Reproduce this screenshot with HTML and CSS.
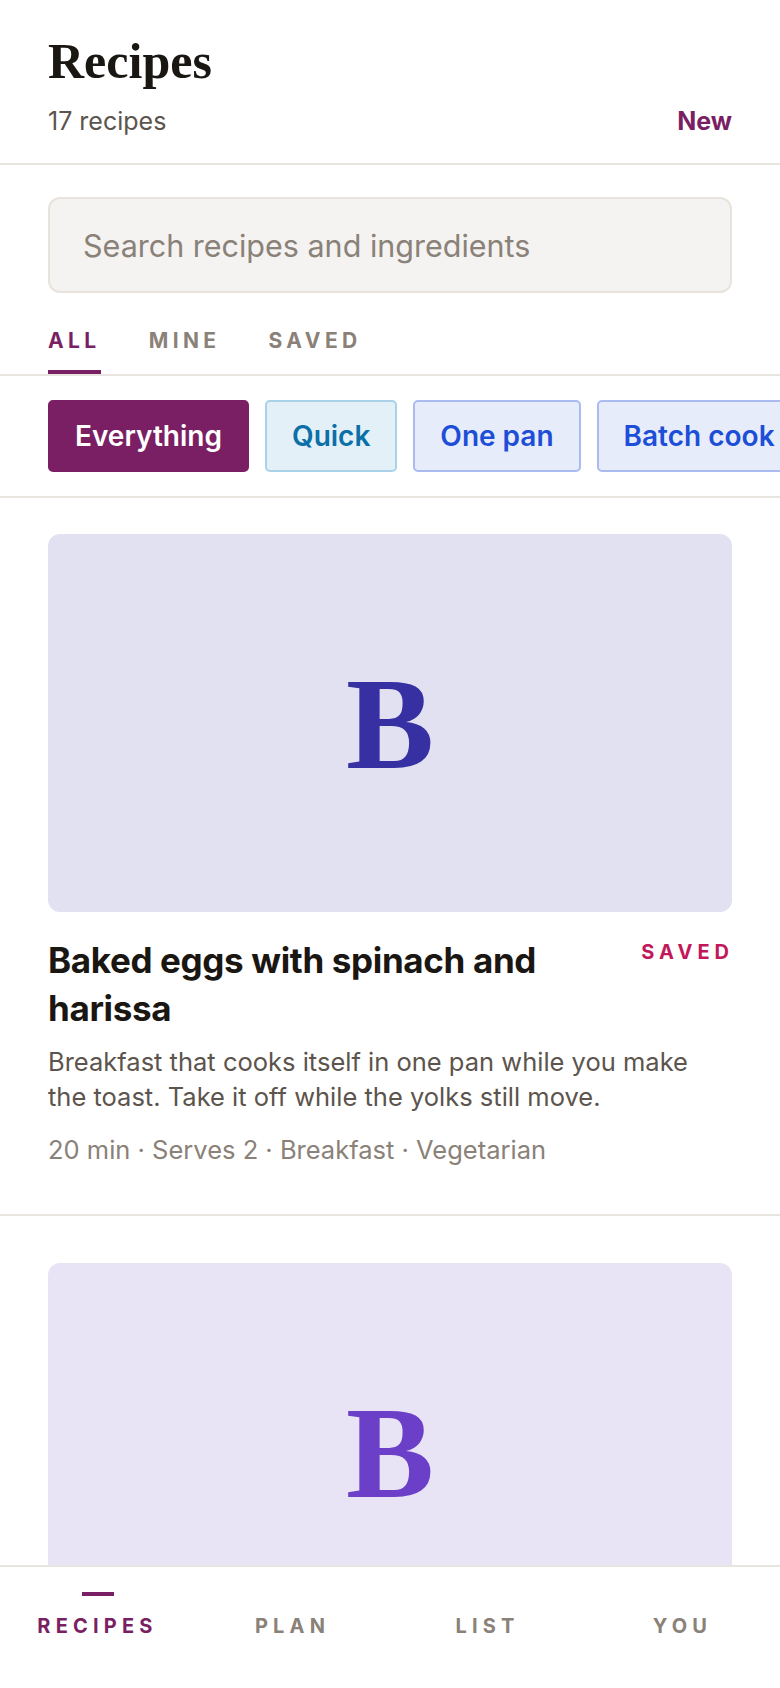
FILE: index.html
```html
<!DOCTYPE html>
<html lang="en">
<head>
    <meta charset="UTF-8">
    <meta name="viewport" content="width=device-width, initial-scale=1.0">
    <title>Recipes</title>
    <link rel="stylesheet" href="styles.css">
</head>
<body>
    <div class="app">
        <header class="page-header">
            <h1 class="page-title">Recipes</h1>
            <div class="page-sub">
                <span class="recipe-count">17 recipes</span>
                <a class="new-link" href="#">New</a>
            </div>
        </header>

        <main class="content">
            <div class="search-wrap">
                <input class="search-input" type="text" placeholder="Search recipes and ingredients">
            </div>

            <nav class="tabs">
                <a class="tab active" href="#">ALL</a>
                <a class="tab" href="#">MINE</a>
                <a class="tab" href="#">SAVED</a>
            </nav>

            <div class="chips">
                <button class="chip chip-active">Everything</button>
                <button class="chip chip-sky">Quick</button>
                <button class="chip chip-blue">One pan</button>
                <button class="chip chip-blue">Batch cook</button>
                <button class="chip chip-blue">Freezer</button>
            </div>

            <div class="recipe-list">
                <article class="recipe-card">
                    <div class="recipe-thumb thumb-indigo">B</div>
                    <div class="recipe-head">
                        <h2 class="recipe-title">Baked eggs with spinach and harissa</h2>
                        <span class="saved-tag">SAVED</span>
                    </div>
                    <p class="recipe-desc">Breakfast that cooks itself in one pan while you make the toast. Take it off while the yolks still move.</p>
                    <p class="recipe-meta">20 min · Serves 2 · Breakfast · Vegetarian</p>
                </article>

                <article class="recipe-card">
                    <div class="recipe-thumb thumb-violet">B</div>
                </article>
            </div>
        </main>

        <footer class="bottom-nav">
            <a class="nav-item active" href="#"><span class="nav-mark"></span>RECIPES</a>
            <a class="nav-item" href="#"><span class="nav-mark"></span>PLAN</a>
            <a class="nav-item" href="#"><span class="nav-mark"></span>LIST</a>
            <a class="nav-item" href="#"><span class="nav-mark"></span>YOU</a>
        </footer>
    </div>
</body>
</html>
```

FILE: styles.css
```css
body, html {
    margin: 0;
    padding: 0;
    height: 100%;
    overflow: hidden;
    background-color: #ffffff;
    font-family: Inter, "Noto Sans", sans-serif;
    color: #1a1612;
}
a {
    text-decoration: none;
}
.app {
    display: flex;
    flex-direction: column;
    height: 100vh;
}
.page-header {
    padding: 34px 48px 27px;
    border-bottom: 2px solid #e8e4df;
}
.page-title {
    margin: 0;
    font-family: "Liberation Serif", "Times New Roman", serif;
    font-size: 50px;
    line-height: 55px;
    font-weight: 700;
    color: #1a1612;
}
.page-sub {
    display: flex;
    justify-content: space-between;
    align-items: baseline;
    margin-top: 17px;
    line-height: 30px;
}
.recipe-count {
    font-size: 25px;
    color: #5c544d;
}
.new-link {
    font-size: 25px;
    font-weight: 700;
    color: #7a1f64;
}
.content {
    flex: 1;
    overflow: hidden;
}
.search-wrap {
    padding: 32px 48px 0;
}
.search-input {
    box-sizing: border-box;
    width: 100%;
    height: 96px;
    padding: 0 33px;
    border: 2px solid #e8e3dd;
    border-radius: 12px;
    background-color: #f4f3f1;
    font-family: Inter, "Noto Sans", sans-serif;
    font-size: 30.5px;
    color: #1a1612;
    outline: none;
}
.search-input::placeholder {
    color: #8a8178;
}
.tabs {
    display: flex;
    gap: 48px;
    margin-top: 36px;
    padding: 0 48px;
    border-bottom: 2px solid #e8e4df;
}
.tab {
    padding-bottom: 17px;
    border-bottom: 4px solid transparent;
    font-size: 21px;
    line-height: 24px;
    font-weight: 700;
    letter-spacing: 0.21em;
    color: #8a8178;
}
.tab.active {
    color: #7a1f64;
    border-bottom-color: #7a1f64;
}
.chips {
    display: flex;
    gap: 16px;
    padding: 24px 48px;
    overflow: hidden;
    border-bottom: 2px solid #e8e4df;
}
.chip {
    flex: none;
    box-sizing: border-box;
    height: 72px;
    padding: 0 25px;
    border: 2px solid transparent;
    border-radius: 5px;
    font-family: Inter, "Noto Sans", sans-serif;
    font-size: 28px;
    font-weight: 600;
    white-space: nowrap;
    cursor: pointer;
}
.chip-active {
    background-color: #7b1f65;
    border-color: #7b1f65;
    color: #ffffff;
}
.chip-sky {
    background-color: #e4f0f7;
    border-color: #a9d2e8;
    color: #0b6fa8;
}
.chip-blue {
    background-color: #e7ecfb;
    border-color: #aabbf0;
    color: #1d4ed8;
}
.recipe-card {
    padding: 47px 48px 47px;
    border-bottom: 2px solid #e8e4df;
}
.recipe-card:first-child {
    padding-top: 36px;
}
.recipe-thumb {
    display: flex;
    align-items: center;
    justify-content: center;
    height: 378px;
    border-radius: 12px;
    font-family: "Liberation Serif", "Times New Roman", serif;
    font-size: 132px;
    font-weight: 700;
}
.thumb-indigo {
    background-color: #e2e1f2;
    color: #3730a3;
}
.thumb-violet {
    background-color: #e8e4f6;
    color: #6c3fc8;
}
.recipe-head {
    display: flex;
    justify-content: space-between;
    align-items: flex-start;
    gap: 24px;
    margin-top: 24px;
}
.recipe-title {
    flex: 1;
    margin: 0;
    font-size: 35px;
    line-height: 48px;
    font-weight: 700;
    letter-spacing: -0.01em;
    color: #1a1612;
}
.saved-tag {
    margin-top: 4px;
    margin-right: -2px;
    font-size: 20px;
    line-height: 24px;
    font-weight: 700;
    letter-spacing: 0.25em;
    color: #c2185b;
}
.recipe-desc {
    margin: 12px 0 0;
    font-size: 25.5px;
    line-height: 35px;
    color: #5c544d;
}
.recipe-meta {
    margin: 18px 0 0;
    font-size: 25.5px;
    line-height: 35px;
    color: #8a8178;
}
.bottom-nav {
    display: grid;
    grid-template-columns: repeat(4, 1fr);
    height: 123px;
    box-sizing: border-box;
    padding-top: 25px;
    border-top: 2px solid #e8e4df;
    background-color: #ffffff;
}
.nav-item {
    display: flex;
    flex-direction: column;
    align-items: center;
    gap: 18px;
    font-size: 20px;
    line-height: 24px;
    font-weight: 700;
    letter-spacing: 0.26em;
    color: #8a8178;
}
.nav-mark {
    width: 32px;
    height: 4px;
}
.nav-item.active {
    color: #7a1f64;
}
.nav-item.active .nav-mark {
    background-color: #7a1f64;
}
```
